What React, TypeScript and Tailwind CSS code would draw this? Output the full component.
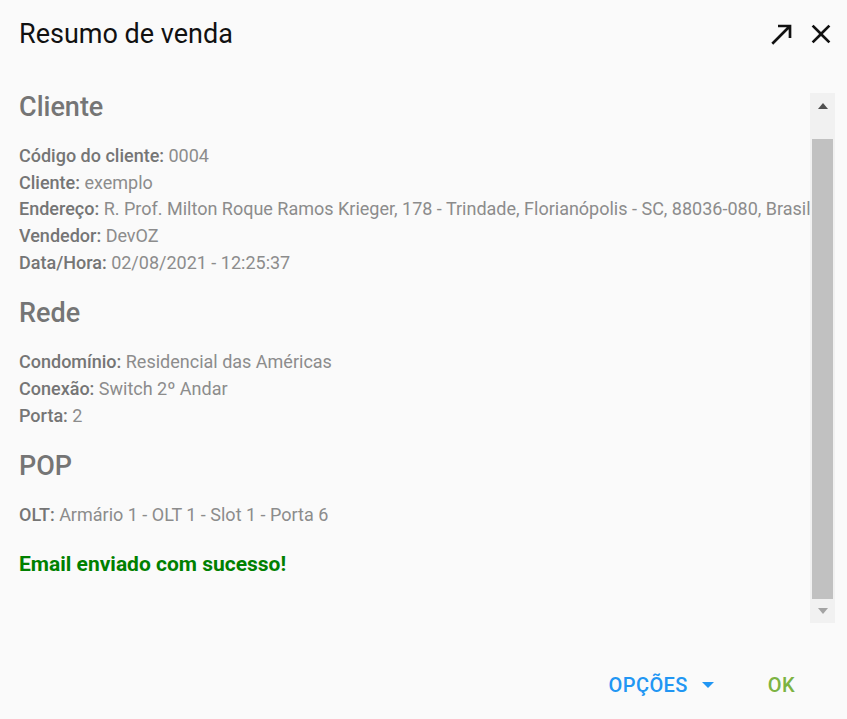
const sections = [
  {
    title: "Cliente",
    rows: [
      ["Código do cliente:", "0004"],
      ["Cliente:", "exemplo"],
      ["Endereço:", "R. Prof. Milton Roque Ramos Krieger, 178 - Trindade, Florianópolis - SC, 88036-080, Brasil"],
      ["Vendedor:", "DevOZ"],
      ["Data/Hora:", "02/08/2021 - 12:25:37"],
    ],
  },
  {
    title: "Rede",
    rows: [
      ["Condomínio:", "Residencial das Américas"],
      ["Conexão:", "Switch 2º Andar"],
      ["Porta:", "2"],
    ],
  },
  {
    title: "POP",
    rows: [["OLT:", "Armário 1 - OLT 1 - Slot 1 - Porta 6"]],
  },
];

function ArrowIcon() {
  return (
    <svg viewBox="0 0 24 24" className="h-8 w-8" fill="currentColor">
      <path d="M9 5v2h6.59L4 18.59 5.41 20 17 8.41V15h2V5z" />
    </svg>
  );
}

function CloseIcon() {
  return (
    <svg viewBox="0 0 24 24" className="h-8 w-8" fill="currentColor">
      <path d="M19 6.41L17.59 5 12 10.59 6.41 5 5 6.41 10.59 12 5 17.59 6.41 19 12 13.41 17.59 19 19 17.59 13.41 12z" />
    </svg>
  );
}

function Scrollbar() {
  return (
    <div className="flex w-[25px] shrink-0 flex-col items-center bg-[#f1f1f1]">
      <div className="flex h-[26px] w-full items-center justify-center">
        <div className="h-0 w-0 border-x-[5px] border-b-[6px] border-x-transparent border-b-[#505050]" />
      </div>
      <div className="mt-[20px] w-[21px] flex-1 bg-[#c1c1c1]" />
      <div className="flex h-[24px] w-full items-center justify-center">
        <div className="h-0 w-0 border-x-[5px] border-t-[6px] border-x-transparent border-t-[#a3a3a3]" />
      </div>
    </div>
  );
}

export default function App() {
  return (
    <div className="flex h-[719px] w-[847px] flex-col bg-[#fafafa] font-['Roboto',sans-serif]">
      <header className="flex h-[68px] items-center justify-between pl-[19px] pr-[10px]">
        <h1 className="text-[27px] leading-[32px] text-[#111]">Resumo de venda</h1>
        <div className="flex items-center gap-[7px] text-[#111]">
          <ArrowIcon />
          <CloseIcon />
        </div>
      </header>

      <div className="mt-[25px] flex h-[530px] pl-[19px] pr-[12px]">
        <div className="min-w-0 flex-1 overflow-hidden">
          {sections.map((section, i) => (
            <section key={section.title} className={i === 0 ? "" : "mt-[23px]"}>
              <h2 className="text-[27px] font-medium leading-[28px] text-[#757575]">{section.title}</h2>
              <div className="mt-[22px]">
                {section.rows.map(([label, value]) => (
                  <p key={label} className="whitespace-nowrap text-[18px] leading-[26.67px] text-[#8c8c8c]">
                    <span className="font-medium text-[#757575]">{label}</span> {value}
                  </p>
                ))}
              </div>
            </section>
          ))}
          <p className="mt-[21px] text-[21px] font-bold leading-[28px] text-[#008000]">Email enviado com sucesso!</p>
        </div>
        <Scrollbar />
      </div>

      <footer className="flex flex-1 items-center justify-end gap-[54px] pr-[52px] pt-[28px]">
        <button className="flex items-center gap-[14px] text-[20px] font-medium uppercase tracking-[0.02em] text-[#2196f3]">
          Opções
          <span className="h-0 w-0 border-x-[6px] border-t-[6px] border-x-transparent border-t-[#2196f3]" />
        </button>
        <button className="text-[20px] font-medium uppercase tracking-[0.02em] text-[#7cb342]">OK</button>
      </footer>
    </div>
  );
}
